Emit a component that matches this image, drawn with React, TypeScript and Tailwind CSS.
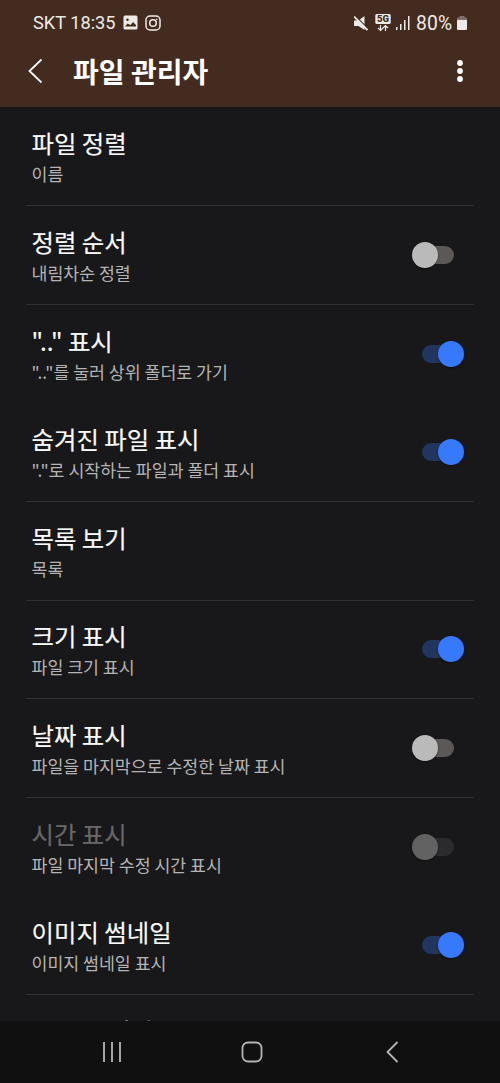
import clsx from 'clsx';

type Row = {
  title: string;
  desc?: string;
  on?: boolean;
  disabled?: boolean;
  divider?: boolean;
};

const rows: Row[] = [
  { title: '파일 정렬', desc: '이름', divider: true },
  { title: '정렬 순서', desc: '내림차순 정렬', on: false, divider: true },
  { title: '".." 표시', desc: '".."를 눌러 상위 폴더로 가기', on: true },
  { title: '숨겨진 파일 표시', desc: '"."로 시작하는 파일과 폴더 표시', on: true, divider: true },
  { title: '목록 보기', desc: '목록', divider: true },
  { title: '크기 표시', desc: '파일 크기 표시', on: true, divider: true },
  { title: '날짜 표시', desc: '파일을 마지막으로 수정한 날짜 표시', on: false, divider: true },
  { title: '시간 표시', desc: '파일 마지막 수정 시간 표시', on: false, disabled: true },
  { title: '이미지 썸네일', desc: '이미지 썸네일 표시', on: true, divider: true },
  { title: 'MP3 이미지' },
];

function Toggle({ on, disabled }: { on: boolean; disabled?: boolean }) {
  return (
    <div className="relative flex h-[26px] w-[52px] items-center justify-center">
      <div
        className={clsx(
          'h-[18px] w-8 rounded-full',
          on ? 'bg-[#22355f]' : disabled ? 'bg-[#2b2b2d]' : 'bg-[#5c5857]',
        )}
      />
      <div
        className={clsx(
          'absolute top-0 size-[26px] rounded-full shadow-[0_1px_2px_rgba(0,0,0,0.4)]',
          on ? 'right-0 bg-[#3779fd]' : 'left-0',
          !on && (disabled ? 'bg-[#626262]' : 'bg-[#bababa]'),
        )}
      />
    </div>
  );
}

function SettingRow({ row }: { row: Row }) {
  return (
    <div className="h-[98.6px] shrink-0 px-[26px]">
      <div
        className={clsx(
          'flex h-full items-center justify-between border-b pr-[10px] pl-[5.5px]',
          row.divider ? 'border-[#303032]' : 'border-transparent',
        )}
      >
        <div className="self-start pt-[18.8px]">
          <div
            className={clsx(
              'text-[24.4px] leading-[34px] font-normal [-webkit-text-stroke:0.15px_currentColor]',
              row.disabled ? 'text-[#68686a]' : 'text-[#fafafa]',
            )}
          >
            {row.title}
          </div>
          {row.desc && <div className="mt-[0.1px] text-[17.3px] leading-[28px] text-[#b4b4b4]">{row.desc}</div>}
        </div>
        {row.on !== undefined && <Toggle on={row.on} disabled={row.disabled} />}
      </div>
    </div>
  );
}

function StatusBar() {
  return (
    <div className="flex h-[46px] items-center justify-between px-[33px] text-[#eeeae8]">
      <div className="flex items-center">
        <span className="w-[90px] font-[Roboto,sans-serif] text-[18.2px] whitespace-nowrap">SKT 18:35</span>
        <svg width="15" height="15" viewBox="0 0 15 15">
          <path
            fillRule="evenodd"
            fill="currentColor"
            d="M2 .5h11a1.5 1.5 0 0 1 1.5 1.5v11a1.5 1.5 0 0 1-1.5 1.5H2A1.5 1.5 0 0 1 .5 13V2A1.5 1.5 0 0 1 2 .5zM4.500 3.500a1.300 1.300 0 1 0 0 2.600 1.300 1.300 0 0 0 0-2.600zM2 11.500h11V10L10 7l-2.500 3-3-1.500z"
          />
        </svg>
        <svg className="ml-[7px]" width="16" height="16" viewBox="0 0 16 16" fill="none" stroke="currentColor" strokeWidth="1.500">
          <rect x="1" y="1" width="14" height="14" rx="4" />
          <circle cx="8" cy="8" r="3.300" />
          <circle cx="11.800" cy="4.200" r=".8" fill="currentColor" stroke="none" />
        </svg>
      </div>
      <div className="flex items-center">
        <svg width="14" height="15" viewBox="0 0 14 15">
          <path d="M0 4.500h4.500L10.500 0v14l-6-4H0z" fill="currentColor" />
          <path d="M1.500 0l13 13" stroke="#442b20" strokeWidth="1.200" />
          <path d="M0 .5l13.500 13.500" stroke="currentColor" strokeWidth="1.800" />
        </svg>
        <svg className="ml-[7px]" width="16" height="18" viewBox="0 0 16 18">
          <rect x=".3" y="0" width="15.400" height="10" rx="1.500" fill="currentColor" />
          <text x="8" y="8.300" textAnchor="middle" fontFamily="Roboto, sans-serif" fontSize="9.500" fontWeight="900" fill="#442b20">5G</text>
          <path d="M5.500 11v5.500M3 14l2.500 2.500L8 14M10.500 17v-5.500M8 14l2.500-2.500L13 14" fill="none" stroke="currentColor" strokeWidth="1.200" />
        </svg>
        <svg className="ml-[5px]" width="14" height="14" viewBox="0 0 14 14" fill="currentColor">
          <path d="M0 11h1.500v3H0zM4 8h1.500v6H4zM8 4h1.500v10H8zM12 0h1.500v14H12z" />
        </svg>
        <span className="ml-[6px] w-[41px] pt-0.5 font-[Roboto,sans-serif] text-[19.300px] tracking-[0.2px] whitespace-nowrap">80%</span>
        <svg width="10" height="14" viewBox="0 0 10 14">
          <path d="M2.500 0h5v1.500H9a1 1 0 0 1 1 1V5H0V2.500a1 1 0 0 1 1-1h1.500z" fill="#80706a" />
          <path d="M0 4h10v9a1 1 0 0 1-1 1H1a1 1 0 0 1-1-1z" fill="currentColor" />
        </svg>
      </div>
    </div>
  );
}

export default function App() {
  return (
    <div className="flex h-[1083px] w-[500px] flex-col overflow-hidden bg-[#18181a] font-['Noto_Sans_CJK_KR',sans-serif]">
      <header className="h-[107px] shrink-0 bg-[#442b20]">
        <StatusBar />
        <div className="flex h-[50px] items-center pr-[36px] pl-[28px] text-white">
          <svg width="15" height="26" viewBox="0 0 15 26" fill="none" stroke="currentColor" strokeWidth="1.800">
            <path d="M13.500 1.500L1.500 13l12 11.500" />
          </svg>
          <h1 className="ml-[30px] grow text-[28px] leading-[50px] font-bold">파일 관리자</h1>
          <svg width="8" height="24" viewBox="0 0 8 24" fill="currentColor">
            <circle cx="4" cy="4" r="2.900" />
            <circle cx="4" cy="12" r="2.900" />
            <circle cx="4" cy="20" r="2.900" />
          </svg>
        </div>
      </header>

      <main className="min-h-0 flex-1 overflow-hidden pt-[0.6px]">
        {rows.map((row) => (
          <SettingRow key={row.title} row={row} />
        ))}
      </main>

      <nav className="flex h-[62px] shrink-0 items-center justify-between bg-[#101011] pr-[101px] pl-[102px] text-[#b8b4b2]">
        <svg width="20" height="22" viewBox="0 0 20 22" stroke="currentColor" strokeWidth="1.800">
          <path d="M2 1v20M10 1v20M18 1v20" />
        </svg>
        <svg className="mr-[4px]" width="22" height="22" viewBox="0 0 22 22" fill="none" stroke="currentColor" strokeWidth="1.800">
          <rect x="1.500" y="1.500" width="19" height="19" rx="5.500" />
        </svg>
        <svg width="13" height="22" viewBox="0 0 13 22" fill="none" stroke="currentColor" strokeWidth="1.800">
          <path d="M11.500 1L1.500 11l10 10" />
        </svg>
      </nav>
    </div>
  );
}
